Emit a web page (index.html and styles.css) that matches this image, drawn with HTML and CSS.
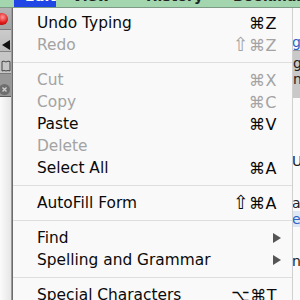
FILE: index.html
```html
<!DOCTYPE html>
<html lang="en">
<head>
  <meta charset="UTF-8">
  <title>Edit menu</title>
  <link rel="stylesheet" href="styles.css">
</head>
<body>
  <div class="screen">
    <div class="menubar">
      <span class="bar-item bar-active">Edit</span>
      <span class="bar-item bar-view">View</span>
      <span class="bar-item bar-history">History</span>
      <span class="bar-item bar-bookmarks">Bookmarks</span>
    </div>

    <div class="below">
      <div class="chrome">
        <div class="chrome-title"><span class="close-dot"></span></div>
        <div class="chrome-toolbar">
          <svg width="8" height="10" viewBox="0 0 8 10"><polygon points="8,0 8,10 0,5" fill="#111"/></svg>
        </div>
        <div class="chrome-bookmarks">
          <svg width="10" height="12" viewBox="0 0 10 12"><path d="M1 1.5 Q3 0.5 5 2 Q7 0.5 9 1.5 L9 11 Q7 10 5 11 Q3 10 1 11 Z" fill="none" stroke="#444" stroke-width="1"/></svg>
        </div>
        <div class="chrome-tab">
          <svg width="11" height="11" viewBox="0 0 11 11"><circle cx="5.5" cy="5.5" r="5.5" fill="#6e6e6e"/><path d="M3.5 3.5 L7.5 7.5 M7.5 3.5 L3.5 7.5" stroke="#cfcfcf" stroke-width="1.4"/></svg>
        </div>
        <div class="chrome-page"></div>
      </div>

      <div class="menu">
        <div class="item"><span class="label">Undo Typing</span><span class="key">⌘Z</span></div>
        <div class="item disabled"><span class="label">Redo</span><span class="key"><span class="shift">⇧</span>⌘Z</span></div>
        <div class="sep"></div>
        <div class="item disabled"><span class="label">Cut</span><span class="key">⌘X</span></div>
        <div class="item disabled"><span class="label">Copy</span><span class="key">⌘C</span></div>
        <div class="item"><span class="label">Paste</span><span class="key">⌘V</span></div>
        <div class="item disabled"><span class="label">Delete</span></div>
        <div class="item"><span class="label">Select All</span><span class="key">⌘A</span></div>
        <div class="sep"></div>
        <div class="item"><span class="label">AutoFill Form</span><span class="key"><span class="shift">⇧</span>⌘A</span></div>
        <div class="sep"></div>
        <div class="item"><span class="label">Find</span><span class="arrow"></span></div>
        <div class="item"><span class="label">Spelling and Grammar</span><span class="arrow"></span></div>
        <div class="sep"></div>
        <div class="item"><span class="label">Special Characters</span><span class="key">⌥⌘T</span></div>
      </div>

      <div class="side">
        <div class="side-white"></div>
        <div class="side-text blue">g</div>
        <div class="side-grey"><span>g</span><span>n</span></div>
        <div class="side-white tall"></div>
        <div class="side-text">U</div>
        <div class="side-white"></div>
        <div class="side-text">a</div>
        <div class="side-text blue tint">e</div>
        <div class="side-white"></div>
        <div class="side-text">n</div>
      </div>
    </div>
  </div>
</body>
</html>
```

FILE: styles.css
```css
* {
  margin: 0;
  padding: 0;
  box-sizing: border-box;
}

body {
  width: 300px;
  height: 300px;
  overflow: hidden;
  font-family: 'DejaVu Sans', 'Liberation Sans', sans-serif;
  background-color: #fff;
}

.screen {
  display: flex;
  flex-direction: column;
  height: 300px;
  overflow: hidden;
}

/* top menu bar, only its lower edge is in view */
.menubar {
  flex-shrink: 0;
  height: 8px;
  display: flex;
  background-color: #a3d5ae;
  border-bottom: 1px solid #7d9a84;
  overflow: hidden;
  font-size: 14px;
  font-weight: bold;
  color: #222;
}

.bar-item {
  line-height: 16px;
  margin-top: -12px;
  height: 20px;
}

.bar-active {
  margin-left: 14px;
  width: 50px;
  padding-left: 11px;
  background-color: #2146e6;
  color: #fff;
}

.bar-view {
  margin-left: 16px;
}

.bar-history {
  margin-left: 36px;
}

.bar-bookmarks {
  margin-left: 30px;
}

.below {
  flex: 1;
  min-height: 0;
  display: flex;
  overflow: hidden;
}

/* browser window peeking out on the left */
.chrome {
  width: 12px;
  flex-shrink: 0;
  display: flex;
  flex-direction: column;
  overflow: hidden;
}

.chrome-title {
  height: 22px;
  flex-shrink: 0;
  background: linear-gradient(#b4b4b4, #a4a4a4);
  border-bottom: 1px solid #7a7a7a;
  padding-top: 5px;
}

.close-dot {
  display: block;
  width: 12px;
  height: 12px;
  margin-left: -4px;
  border-radius: 50%;
  background: radial-gradient(circle at 55% 35%, #ff9a9a, #e01818 55%, #9c0000);
}

.chrome-toolbar {
  height: 22px;
  flex-shrink: 0;
  background: linear-gradient(#cbcbcb, #bcbcbc);
  border-bottom: 1px solid #858585;
  padding: 5px 0 0 2px;
}

.chrome-bookmarks {
  height: 22px;
  flex-shrink: 0;
  background-color: #c6c6c6;
  border-bottom: 1px solid #7a7a7a;
  padding: 5px 0 0 1px;
}

.chrome-tab {
  height: 23px;
  flex-shrink: 0;
  background-color: #989898;
  border-bottom: 1px solid #5a5a5a;
  padding: 6px 0 0 0;
}

.chrome-tab svg {
  margin-left: -1px;
}

.chrome-page {
  flex: 1;
  background: linear-gradient(90deg, #fbfbfb, #e4e4e4);
}

/* the Edit menu */
.menu {
  width: 281px;
  flex-shrink: 0;
  padding: 4px 0;
  background-color: #f9f9f9;
  border-left: 1px solid #6c6c6c;
  border-right: 1px solid #d0d0d0;
  box-shadow: -1px 0 0 #9a9a9a;
  display: flex;
  flex-direction: column;
  font-size: 15.4px;
  color: #0a0a0a;
}

.item {
  height: 22px;
  flex-shrink: 0;
  display: flex;
  align-items: center;
  padding: 0 15px 0 24px;
}

.label {
  flex: 1;
}

.key {
  font-size: 16px;
  letter-spacing: 0.5px;
}

.shift {
  font-size: 19px;
  line-height: 16px;
}

.disabled {
  color: #a3a3a3;
}

.arrow {
  width: 0;
  height: 0;
  margin-right: -4px;
  border-top: 5px solid transparent;
  border-bottom: 5px solid transparent;
  border-left: 8px solid #555;
}

.sep {
  height: 13px;
  flex-shrink: 0;
  display: flex;
  align-items: center;
}

.sep::before {
  content: '';
  flex: 1;
  height: 1px;
  background-color: #dedede;
}

/* sliver of page on the right */
.side {
  flex: 1;
  display: flex;
  flex-direction: column;
  overflow: hidden;
  font-size: 14px;
  color: #222;
  background-color: #fafafa;
}

.side > * {
  flex-shrink: 0;
}

.side-white {
  height: 26px;
}

.side-white.tall {
  height: 55px;
}

.side-text {
  height: 16px;
  line-height: 16px;
  margin-left: -1px;
}

.side-text.blue {
  color: #2d62c4;
}

.side-text.tint {
  background-color: #dde8f6;
}

.side-grey {
  height: 48px;
  background-color: #c9c9c9;
  border-top: 1px solid #9a9a9a;
  display: flex;
  flex-direction: column;
  gap: 2px;
  padding-top: 5px;
  line-height: 14px;
}
```
